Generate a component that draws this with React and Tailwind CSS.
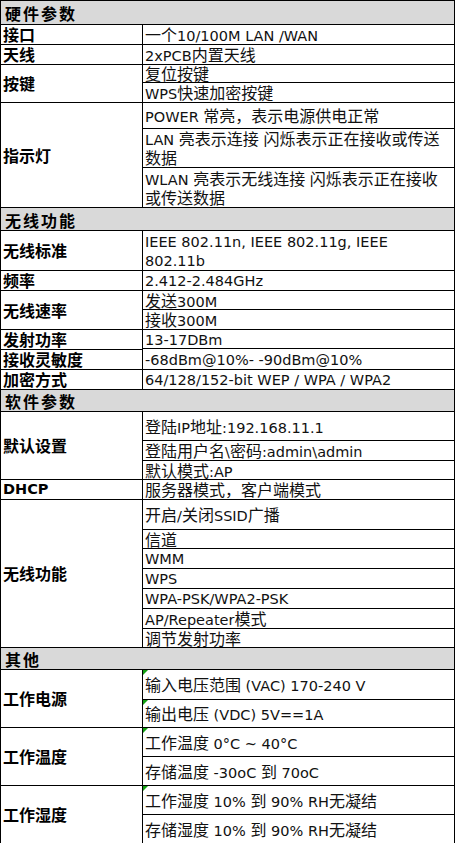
const CJK = /([\u3000-\u303f\u4e00-\u9fff\uff00-\uffef]+)/;

// Chinese runs at 16px, latin runs a bit smaller, like the original sheet
const Txt = ({ s }) =>
  s.split(CJK).map((part, i) =>
    part === '' ? null : i % 2 ? (
      <span key={i} className="text-[16px] leading-[19px] font-['Noto_Sans_CJK_SC',sans-serif]">{part}</span>
    ) : (
      <span key={i} className="text-[14.5px] leading-[19px]">{part}</span>
    )
  );

const sections = [
  {
    title: '硬件参数', h: 'h-[24px]',
    rows: [
      { label: '接口', cells: [['一个10/100M LAN /WAN', 'h-[20px]']] },
      { label: '天线', cells: [['2xPCB内置天线', 'h-[20px]']] },
      { label: '按键', cells: [['复位按键', 'h-[18px]'], ['WPS快速加密按键', 'h-[20px]']] },
      {
        label: '指示灯',
        cells: [
          ['POWER 常亮，表示电源供电正常', 'h-[26px]'],
          ['LAN 亮表示连接 闪烁表示正在接收或传送\n数据', 'h-[39px]'],
          ['WLAN 亮表示无线连接 闪烁表示正在接收\n或传送数据', 'h-[40px]'],
        ],
      },
    ],
  },
  {
    title: '无线功能', h: 'h-[23px]',
    rows: [
      { label: '无线标准', cells: [['IEEE 802.11n, IEEE 802.11g, IEEE\n802.11b', 'h-[40px]']] },
      { label: '频率', cells: [['2.412-2.484GHz', 'h-[20px]']] },
      { label: '无线速率', cells: [['发送300M', 'h-[19px]'], ['接收300M', 'h-[20px]']] },
      { label: '发射功率', cells: [['13-17DBm', 'h-[19px]']] },
      { label: '接收灵敏度', cells: [['-68dBm@10%- -90dBm@10%', 'h-[20px]']] },
      { label: '加密方式', cells: [['64/128/152-bit WEP / WPA / WPA2', 'h-[20px]']] },
    ],
  },
  {
    title: '软件参数', h: 'h-[22px]',
    rows: [
      {
        label: '默认设置',
        cells: [
          ['登陆IP地址:192.168.11.1', 'h-[29px]'],
          ['登陆用户名\\密码:admin\\admin', 'h-[20px]'],
          ['默认模式:AP', 'h-[19px]'],
        ],
      },
      { label: 'DHCP', cells: [['服务器模式，客户端模式', 'h-[20px]']] },
      {
        label: '无线功能',
        cells: [
          ['开启/关闭SSID广播', 'h-[30px]'],
          ['信道', 'h-[19px]'],
          ['WMM', 'h-[20px]'],
          ['WPS', 'h-[20px]'],
          ['WPA-PSK/WPA2-PSK', 'h-[20px]'],
          ['AP/Repeater模式', 'h-[20px]'],
          ['调节发射功率', 'h-[19px]'],
        ],
      },
    ],
  },
  {
    title: '其他', h: 'h-[22px]',
    rows: [
      {
        label: '工作电源',
        cells: [
          ['输入电压范围 (VAC) 170-240 V', 'h-[30px]', true],
          ['输出电压 (VDC) 5V==1A', 'h-[28px]', true],
        ],
      },
      {
        label: '工作温度',
        cells: [
          ['工作温度 0°C ~ 40°C', 'h-[29px]', true],
          ['存储温度 -30oC 到 70oC', 'h-[29px]'],
        ],
      },
      {
        label: '工作湿度',
        cells: [
          ['工作湿度 10% 到 90% RH无凝结', 'h-[29px]', true],
          ['存储湿度 10% 到 90% RH无凝结', 'h-[29px]'],
        ],
      },
    ],
  },
];

const Cell = ({ text, h, flag }) => (
  <div className={`relative flex shrink-0 items-center overflow-visible border-b border-black pl-[2px] leading-[19px] text-[#111] ${h}`}>
    {flag && (
      <span className="absolute left-0 top-0 h-0 w-0 border-r-[5px] border-t-[5px] border-r-transparent border-t-[#12a012]" />
    )}
    <div>
      {text.split('\n').map((line, i) => (
        <div key={i} className="h-[19px] whitespace-pre">
          <Txt s={line} />
        </div>
      ))}
    </div>
  </div>
);

export default function App() {
  return (
    <div className="min-h-screen bg-white">
      <div className="w-[455px] border-l border-r border-t border-black leading-[19px] font-['DejaVu_Sans','Noto_Sans_CJK_SC',sans-serif]">
        {sections.map((sec) => (
          <div key={sec.title}>
            <div className={`flex items-center border-b border-black bg-[#d9d9d9] pl-[4px] pt-[2px] text-[16px] font-bold leading-[19px] tracking-[2px] text-black font-['Noto_Sans_CJK_SC',sans-serif] ${sec.h}`}>
              {sec.title}
            </div>
            {sec.rows.map((row) => (
              <div key={row.label} className="flex">
                <div className="flex w-[142px] shrink-0 items-center border-b border-r border-black pl-[2px] font-bold leading-[19px] text-black">
                  {row.label === 'DHCP' ? (
                    <span className="text-[14.5px] leading-[19px]">DHCP</span>
                  ) : (
                    <span className="text-[16px] leading-[19px] font-['Noto_Sans_CJK_SC',sans-serif]">{row.label}</span>
                  )}
                </div>
                <div className="flex min-w-0 flex-1 flex-col">
                  {row.cells.map(([text, h, flag]) => (
                    <Cell key={text} text={text} h={h} flag={flag} />
                  ))}
                </div>
              </div>
            ))}
          </div>
        ))}
      </div>
    </div>
  );
}
